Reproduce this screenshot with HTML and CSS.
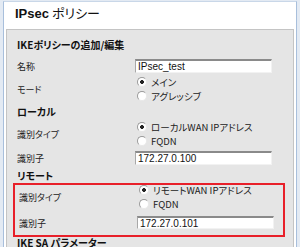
FILE: index.html
```html
<!DOCTYPE html>
<html lang="ja">
<head>
  <meta charset="UTF-8" />
  <title>IPsec ポリシー</title>
  <link rel="stylesheet" href="styles.css">
</head>
<body>
  <div class="page">
    <div class="header">
      <h1><b>IPsec</b> ポリシー</h1>
    </div>

    <div class="panel">
      <h2>IKEポリシーの追加/編集</h2>

      <div class="row row-input">
        <span class="label">名称</span>
        <span class="field">IPsec_test</span>
      </div>
      <div class="row row-radio">
        <span class="label">モード</span>
        <div class="radios">
          <span class="radio on">メイン</span>
          <span class="radio">アグレッシブ</span>
        </div>
      </div>

      <h2 class="sub">ローカル</h2>
      <div class="row row-radio">
        <span class="label">識別タイプ</span>
        <div class="radios">
          <span class="radio on">ローカルWAN IPアドレス</span>
          <span class="radio">FQDN</span>
        </div>
      </div>
      <div class="row row-input">
        <span class="label">識別子</span>
        <span class="field">172.27.0.100</span>
      </div>

      <h2 class="sub remote">リモート</h2>
      <div class="mark">
        <div class="row row-radio">
          <span class="label">識別タイプ</span>
          <div class="radios">
            <span class="radio on">リモートWAN IPアドレス</span>
            <span class="radio">FQDN</span>
          </div>
        </div>
        <div class="row row-input">
          <span class="label">識別子</span>
          <span class="field">172.27.0.101</span>
        </div>
      </div>

      <h2 class="last">IKE SA パラメーター</h2>
    </div>
  </div>
</body>
</html>
```

FILE: styles.css
```css
* { margin: 0; padding: 0; box-sizing: border-box; }

html, body {
  width: 300px;
  height: 247px;
  overflow: hidden;
  background: #e3eaf3;
  font-family: "Noto Sans CJK JP", "DejaVu Sans", sans-serif;
  font-feature-settings: "palt" 1;
  font-size: 9px;
  color: #222;
}

.page {
  margin: 1px 3px 0 3px;
  height: 246px;
  background: #fff;
  border-left: 1px solid #a8bfdc;
  border-right: 1px solid #a8bfdc;
  border-top: 1px solid #c9d7e8;
  overflow: hidden;
}

.header {
  height: 27px;
  padding: 1px 0 0 11px;
}

h1 {
  font-size: 13px;
  font-weight: normal;
  line-height: 20px;
  color: #111;
}

h1 b { font-family: "Liberation Sans", sans-serif; font-weight: bold; }

.panel {
  margin: 0 2px;
  height: 230px;
  background: #e5e5e5;
  border: 1px solid #c4c4c4;
  padding: 8px 0 0 10px;
}

h2 {
  font-size: 10px;
  font-weight: bold;
  line-height: 14px;
  height: 14px;
  color: #111;
}

h2.sub {
  margin-top: 1px;
  height: 16px;
  line-height: 16px;
}

h2.remote {
  margin-top: 3px;
  height: 15px;
  line-height: 15px;
}

h2.last {
  line-height: 11px;
  height: 11px;
}

.row {
  display: flex;
  align-items: center;
}

.row-input {
  height: 15px;
  margin-top: 2px;
}

.panel > h2:first-child + .row-input { margin-top: 6px; }

.row-radio {
  height: 28px;
  margin-top: 2px;
}

.panel > .row-radio + h2 { margin-top: 1px; }
h2.sub + .row-radio { margin-top: 0; }

.label {
  width: 118px;
  padding-top: 1px;
}

.field {
  width: 137px;
  height: 14px;
  background: #fff;
  border-top: 2px solid #8a8a8a;
  border-left: 1px solid #a8a8a8;
  border-right: 1px solid #f2f2f2;
  border-bottom: 1px solid #f2f2f2;
  font-family: "Liberation Sans", sans-serif;
  font-size: 10px;
  line-height: 11px;
  padding-left: 2px;
  color: #111;
}

.radios {
  display: flex;
  flex-direction: column;
}

.radio {
  display: flex;
  align-items: center;
  gap: 4px;
  height: 14px;
  padding-left: 2px;
  font-size: 9.5px;
}

.radio::before {
  content: "";
  width: 8px;
  height: 8px;
  border-radius: 50%;
  background: #fff;
  border: 1px solid #9a9a9a;
  border-right-color: #e8e8e8;
  border-bottom-color: #e8e8e8;
}

.radio.on::before {
  background: radial-gradient(circle, #222 0 1.6px, #fff 2.2px);
}

.mark {
  margin-left: -4px;
  width: 272px;
  padding: 0 0 5px 4px;
  border: 2px solid #e8202a;
}

.mark .row-radio { margin-top: -2px; }
.mark .row-input { margin-top: 4px; }
.mark .field { height: 13px; }
```
